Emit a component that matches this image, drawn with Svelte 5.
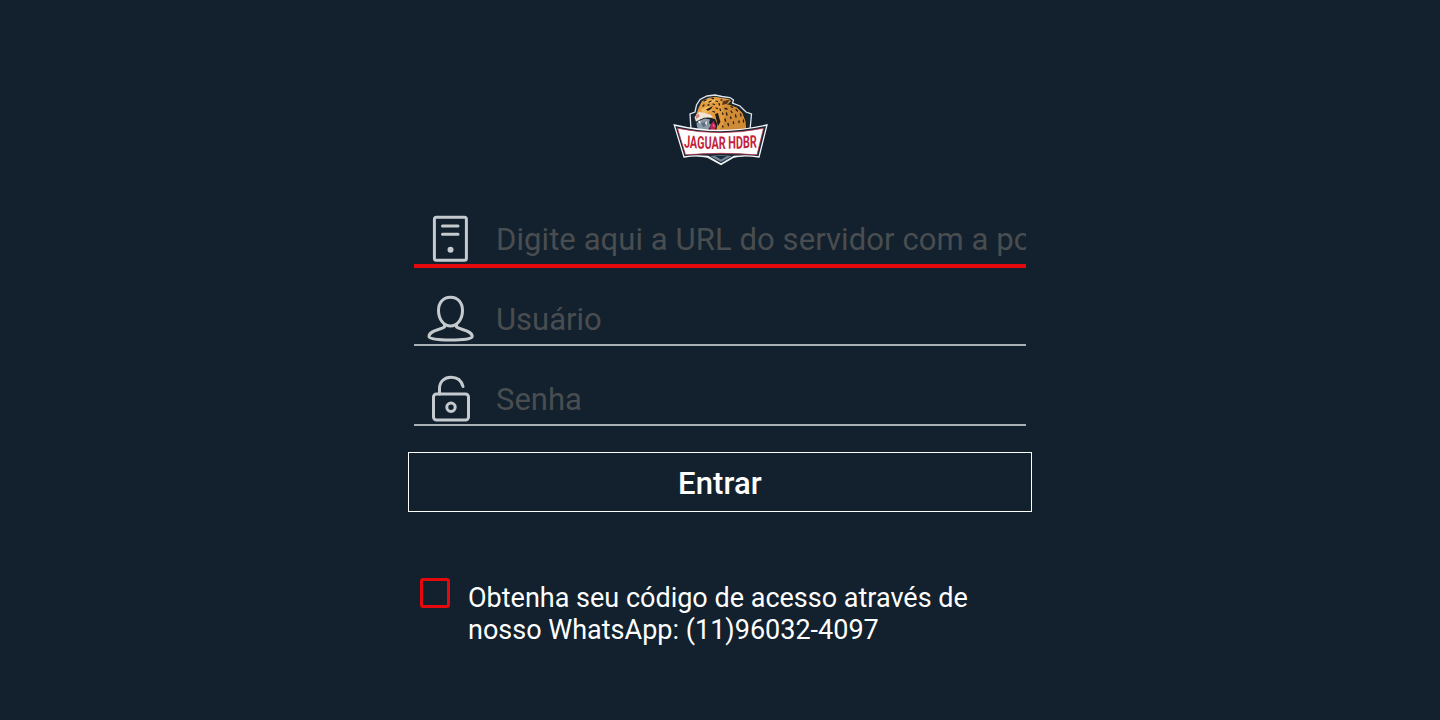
<script lang="ts">
    let server = $state("");
    let user = $state("");
    let password = $state("");
    let accepted = $state(false);

    function login(event: SubmitEvent) {
        event.preventDefault();
    }
</script>

<main class="page">
    <svg class="logo" viewBox="0 0 110 85" aria-label="Jaguar HDBR">
        <!-- shield -->
        <path d="M26 45 L25 29 L30 27 L31.5 20 L35 14.5 L42 11 L50 10 L57 11.5 L65 12.5 L68.5 15 L67.5 18 L75 21 L81 27 L86.5 29 L85 45 L82 70 L69 72 L56 79.5 L42 72 L28 70 Z" fill="#152635" stroke="#dfe5ea" stroke-width="1.3" />
        <!-- back and head -->
        <path d="M50 20 L64 19 L72 22 L78 28 L81 36 L82 46 L48 46 Z" fill="#cf8a35" stroke="#1a1713" stroke-width="1" />
        <path d="M31 30 L34 22 L37 16 L43 13 L50 11.8 L57 13 L64 14 L66 16 L62 20 L57 22 L60 30 L58 40 L53 46 L50 36 L44 31 L33 35 Z" fill="#e29b3f" />
        <path d="M38 17 L46 14 L53 15 L48 18 Z M36 24 L44 21 L47 25 L42 28 L37 28 Z" fill="#f0b85c" />
        <path d="M58 16 L65 14.5 L62 19 L57 20 Z" fill="#5b3a1c" />
        <!-- muzzle and open jaw -->
        <path d="M29.5 32 L34 27 L40 28 L45 29.5 L48 32 L44 33 L39 32.5 L35 36 L31 37 Z" fill="#f0e4d5" />
        <path d="M30.5 31 L34 28.5 L34.5 31.5 L31 34 Z" fill="#cf8583" />
        <path d="M30.5 37 L36 34 L43 32.5 L50 34 L52.5 39 L51 47 L34 47 L31 42 Z" fill="#18212b" />
        <path d="M31.5 38 L36 35 L40 33.5 L45 34.5 L44 38 L46 40 L43 45 L35 45.5 L32 42 Z" fill="#8b9aa8" />
        <path d="M36 38 L41 37 L43 40 L38 42 Z" fill="#5d6d7c" />
        <path d="M33 36.5 L35 35.5 L35.5 39 Z M40 38 L42 36 L41.5 41 Z" fill="#fff" />
        <path d="M45 43 L46.5 38.5 L48.5 36 L51 41 L50 45 L46 45 Z" fill="#c3204d" />
        <path d="M47.5 40 L49 39 L49.5 43 Z" fill="#ef8aa5" />
        <path d="M41 24.5 L48 21 L46 24 L43 26 Z M50 29 L53 28 L54 32 L55.5 37 L53 41 L51.5 35 Z" fill="#241b14" />
        <g class="spots">
            <path d="M39 16 l2 -1 M44 17 l2 -1 M47 13.5 h1.5 M51 16 l1.5 .5 M48 19 l1.5 .5 M54 18.5 l.5 1.5 M51 23 l1.5 .5 M55 24 l.5 1.5 M48 26.5 l1.5 .5 M57.5 28 l.5 1.5 M56 15 h1 M38 21 l1 -1 M43 20 h1" />
            <path d="M60 23.5 l2 .5 M66 21.5 l1.5 1 M61.5 28 l.5 2 M66 26 l1 1.5 M71 24.5 l1.5 1.5 M60 34 l.5 2 M65.5 32 l.5 1.5 M70.5 30 l.5 2 M75.5 29 l.5 2 M57.5 41 l.5 1 M63 38.5 l.5 2 M68.5 37 v1.5 M74 36 v1.5 M78.5 35 v2" />
        </g>
        <!-- banner -->
        <path d="M9.3 40 Q55 51 102 40 L94 72 Q82 70 69 71.5 L56 79 L43 71.5 Q30 70 19 72 Z" fill="#152635" stroke="#f4f6f8" stroke-width="1.3" />
        <path d="M12.5 43.3 Q55 52 98.5 43.3 L92 69.7 Q56 66.8 20.5 69.7 Z" fill="#fff" stroke="#c92942" stroke-width=".7" />
        <path d="M45 71 Q56 69.5 67 71 L56 77 Z" fill="#738596" />
        <path d="M50 71 H62 L56 74.5 Z" fill="#1b2c3b" />
        <g transform="scale(.62 1)">
            <path id="brand-line" d="M30.6 62.6 Q89 65.6 160 62" fill="none" />
            <text class="brand"><textPath href="#brand-line">JAGUAR HDBR</textPath></text>
        </g>
    </svg>

    <form class="login" onsubmit={login}>
        <label class="field active">
            <svg class="icon" viewBox="0 0 48 48">
                <rect x="8.4" y="2.2" width="32" height="43" rx="2" />
                <path d="M16.5 11 H32 M16.5 19.3 H32" />
                <circle class="dot" cx="24.5" cy="34.7" r="3" />
            </svg>
            <input class="server" type="text" bind:value={server} placeholder="Digite aqui a URL do servidor com a porta" />
        </label>

        <label class="field">
            <svg class="icon" viewBox="0 0 48 48">
                <path d="M24.5 2.2 C17 2.2 12.5 8 12.5 15.5 C12.5 24.5 18 31 24.5 31 C31 31 36.5 24.5 36.5 15.5 C36.5 8 32 2.2 24.5 2.2 Z" />
                <path d="M18.5 29.5 V32 C14 35 3 35.5 3 41.5 C3 44 12 45 24.5 45 C37 45 46.2 44 46.2 41.5 C46.2 35.5 35 35 30.5 32 V29.5" />
            </svg>
            <input type="text" bind:value={user} placeholder="Usuário" />
        </label>

        <label class="field">
            <svg class="icon" viewBox="0 0 48 48">
                <rect x="7.5" y="19" width="35" height="26" rx="3" />
                <path d="M13.5 19 V13.5 C13.5 6.5 18.5 2.2 25 2.2 C31 2.2 35.5 5.5 37 11.5" />
                <circle cx="25" cy="32.2" r="4.2" />
            </svg>
            <input type="password" bind:value={password} placeholder="Senha" />
        </label>

        <button class="submit" type="submit">Entrar</button>

        <label class="terms">
            <input class="check" type="checkbox" bind:checked={accepted} />
            <span>Obtenha seu código de acesso através de nosso WhatsApp: (11)96032-4097</span>
        </label>
    </form>
</main>

<style>
    :global(body) {
        background: #12212d;
    }

    .page {
        display: flex;
        flex-direction: column;
        align-items: center;
        box-sizing: border-box;
        height: 720px;
        padding-top: 85px;
        overflow: hidden;
        font-family: Roboto, "Liberation Sans", sans-serif;
        color: #fff;
    }

    .logo {
        width: 110px;
        height: 85px;
        flex-shrink: 0;
    }

    .spots {
        fill: none;
        stroke: #2a1c12;
        stroke-width: 1.3;
        stroke-linecap: round;
    }

    .brand {
        font-family: Roboto, sans-serif;
        font-size: 17.5px;
        font-weight: 700;
        fill: #c51f3c;
    }

    .login {
        display: flex;
        flex-direction: column;
        width: 624px;
        margin-top: 34px;
    }

    .field {
        display: flex;
        align-items: flex-start;
        box-sizing: border-box;
        height: 62px;
        margin: 0 6px 18px;
        padding: 11px 0 0 12px;
        border-bottom: 2px solid #a9b1b7;
    }

    .field.active {
        height: 64px;
        margin-bottom: 16px;
        border-bottom: 4px solid #e3090d;
    }

    .icon {
        width: 48px;
        height: 48px;
        flex-shrink: 0;
        fill: none;
        stroke: #c5cace;
        stroke-width: 3;
        stroke-linecap: round;
        stroke-linejoin: round;
    }

    .icon .dot {
        fill: #c5cace;
        stroke: none;
    }

    .field input {
        flex: 1;
        min-width: 0;
        height: 48px;
        margin-left: 22px;
        padding: 0;
        border: 0;
        outline: none;
        background: transparent;
        color: #fff;
        font: 400 31px Roboto, sans-serif;
    }

    .field .server {
        letter-spacing: 0.08px;
    }

    .field input::placeholder {
        color: #4a4d50;
        opacity: 1;
    }

    .submit {
        height: 60px;
        margin-top: 8px;
        padding: 2px 0 0;
        border: 1px solid #fff;
        background: transparent;
        color: #fff;
        font: 500 31px Roboto, sans-serif;
        letter-spacing: 0.1px;
    }

    .terms {
        display: flex;
        align-items: flex-start;
        margin-top: 66px;
        padding-left: 12px;
    }

    .terms span {
        width: 520px;
        margin: 4px 0 0 18px;
        font-size: 27px;
        line-height: 32px;
    }

    .check {
        appearance: none;
        box-sizing: border-box;
        width: 30px;
        height: 30px;
        margin: 0;
        flex-shrink: 0;
        border: 3px solid #e3090d;
        border-radius: 3px;
    }

    .check:checked {
        background: #e3090d;
    }
</style>
